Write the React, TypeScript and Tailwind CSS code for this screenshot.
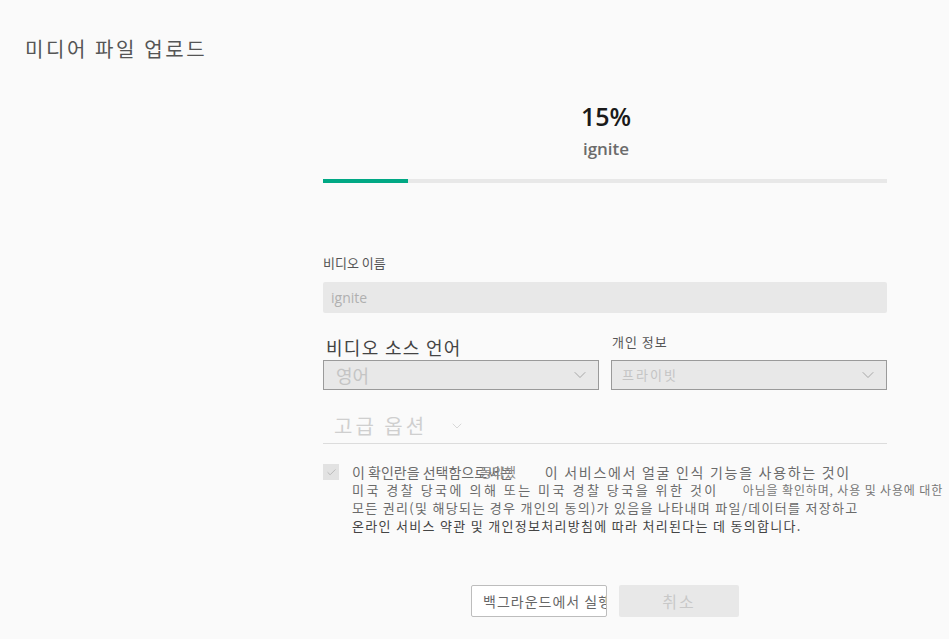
import { ChevronDown, Check } from "lucide-react";

const kr = "font-['Noto_Sans_CJK_KR','Noto_Sans',sans-serif]";

const SelectBox = ({ value, big }: { value: string; big?: boolean }) => (
  <div className="flex h-[30px] items-center justify-between border border-[#9a9a9a] bg-[#e8e8e8] pl-[10px] pr-2">
    <span className={`${big ? "pl-[2px] text-[18px]" : "text-[13px] tracking-[2px]"} text-[#c4c4c4]`}>{value}</span>
    <ChevronDown size={20} strokeWidth={1} className="text-[#9a9a9a]" />
  </div>
);

export default function App() {
  return (
    <div className={`${kr} relative h-[639px] w-[949px] overflow-hidden bg-[#fafafa]`}>
      <h1 className="pl-[25px] pt-[34px] text-[20px] font-normal tracking-[2.6px] text-[#555]">미디어 파일 업로드</h1>

      <div className="ml-[323px] w-[564px]">
        <div className="mt-[35px] flex flex-col items-center pl-[2px]">
          <div className="font-['Open_Sans',sans-serif] text-[25px] font-semibold leading-[34px] text-[#1a1a1a]">15%</div>
          <div className="mt-[2px] font-['Open_Sans',sans-serif] text-[17px] font-semibold leading-[28px] text-[#6b6b6b]">ignite</div>
        </div>

        <div className="mt-[16px] h-[4px] w-full bg-[#e8e8e8]">
          <div className="h-full w-[85px] bg-[#00a884]" />
        </div>

        <div className="mt-[71px] text-[13px] leading-[18px] text-[#555]">비디오 이름</div>
        <div className="mt-[10px] flex h-[31px] items-center rounded-[2px] bg-[#e8e8e8] px-2">
          <span className="font-['Open_Sans',sans-serif] text-[14px] text-[#b0b0b0]">ignite</span>
        </div>

        <div className="mt-[17px] grid grid-cols-2 gap-3">
          <div>
            <div className="h-[30px] pl-[3px] pt-[4px] text-[18px] leading-[26px] tracking-[1.3px] text-[#444]">비디오 소스 언어</div>
            <SelectBox value="영어" big />
          </div>
          <div>
            <div className="h-[30px] pl-[1px] pt-[3px] text-[13px] leading-[18px] tracking-[1px] text-[#555]">개인 정보</div>
            <SelectBox value="프라이빗" />
          </div>
        </div>

        <div className="mt-[21px] flex items-center gap-[22px] border-b border-[#dcdcdc] pb-[2px] pl-[11px]">
          <span className="text-[20px] leading-[30px] tracking-[3px] text-[#cfcfcf]">고급 옵션</span>
          <ChevronDown size={16} strokeWidth={1.2} className="text-[#cfcfcf]" />
        </div>

        <div className="mt-[20px] flex gap-[13px]">
          <div className="flex h-[16px] w-[16px] shrink-0 items-center justify-center bg-[#e2e2e2]">
            <Check size={11} strokeWidth={1.5} className="text-[#a8a8a8]" />
          </div>
          <div className="-mt-[1px] whitespace-nowrap text-[13px] leading-[18px] tracking-[1.3px] text-[#6a6a6a]">
            <div className="relative flex text-[14px]">
              <span className="tracking-[0px]">이 확인란을 선택함으로써는</span>
              <span className="inline-block w-[32px]" />
              <span className="tracking-[1.7px]">이 서비스에서 얼굴 인식 기능을 사용하는 것이</span>
              <span className="absolute left-[128px] top-0 text-[13px] tracking-[0px] text-[#888]">동의했</span>
            </div>
            <div className="tracking-[2.5px]">
              미국 경찰 당국에 의해 또는 미국 경찰 당국을 위한 것이<span className="inline-block w-[24px]" />
              <span className="text-[12px] tracking-[0.85px] text-[#777]">아님을 확인하며, 사용 및 사용에 대한</span>
            </div>
            <div>모든 권리(및 해당되는 경우 개인의 동의)가 있음을 나타내며 파일/데이터를 저장하고</div>
            <div className="text-[#444]">온라인 서비스 약관 및 개인정보처리방침에 따라 처리된다는 데 동의합니다.</div>
          </div>
        </div>
      </div>

      <div className="ml-[471px] mt-[50px] flex gap-3">
        <button className="h-[32px] w-[136px] overflow-hidden whitespace-nowrap rounded-[2px] border border-[#bdbdbd] bg-white pl-[11px] text-left text-[14px] tracking-[1px] text-[#666]">
          백그라운드에서 실행
        </button>
        <button className="h-[32px] w-[120px] rounded-[2px] bg-[#e8e8e8] text-[16px] tracking-[2px] text-[#c8c8c8]">취소</button>
      </div>
    </div>
  );
}
